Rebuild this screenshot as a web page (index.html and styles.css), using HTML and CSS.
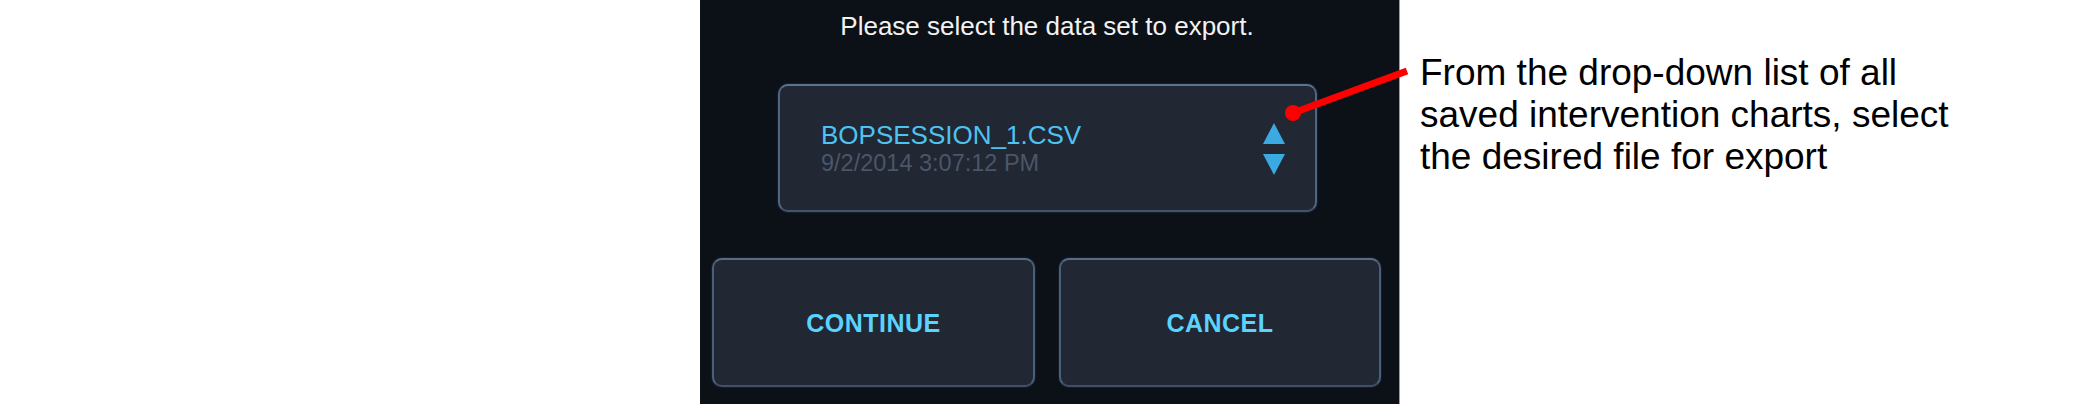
FILE: index.html
```html
<!DOCTYPE html>
<html lang="en">
<head>
<meta charset="utf-8">
<title>Export data set</title>
<link rel="stylesheet" href="styles.css">
</head>
<body>
<div class="page">
  <div class="spacer"></div>
  <div class="panel">
    <div class="title">Please select the data set to export.</div>
    <div class="dropdown">
      <div class="file">
        <div class="file-name">BOPSESSION_1.CSV</div>
        <div class="file-date">9/2/2014 3:07:12 PM</div>
      </div>
      <svg class="arrows" width="22" height="52" viewBox="0 0 22 52" aria-hidden="true">
        <polygon points="11,0 22,21 0,21" fill="#3ba9e2"/>
        <polygon points="0,31 22,31 11,52" fill="#3ba9e2"/>
      </svg>
    </div>
    <div class="buttons">
      <div class="btn">CONTINUE</div>
      <div class="btn">CANCEL</div>
    </div>
  </div>
  <div class="note">From the drop-down list of all<br>saved intervention charts, select<br>the desired file for export</div>
</div>
<svg class="callout" width="2100" height="404" viewBox="0 0 2100 404" aria-hidden="true">
  <line x1="1293" y1="113" x2="1407" y2="71" stroke="#ff0000" stroke-width="7"/>
  <circle cx="1293" cy="113" r="8" fill="#ff0000"/>
</svg>
</body>
</html>
```

FILE: styles.css
```css
html, body {
  margin: 0;
  padding: 0;
  background: #ffffff;
}

body {
  width: 2100px;
  height: 404px;
  overflow: hidden;
  position: relative;
  font-family: "Liberation Sans", Arial, sans-serif;
}

.page {
  display: flex;
  align-items: flex-start;
}

.spacer {
  width: 700px;
  flex: none;
}

.panel {
  width: 699px;
  height: 402px;
  flex: none;
  background: #0c1118;
  border-right: 1px solid #9c9c9c;
  border-bottom: 2px solid #9c9c9c;
  display: flex;
  flex-direction: column;
  padding-top: 11px;
  box-sizing: content-box;
}

.title {
  height: 30px;
  line-height: 30px;
  font-size: 26px;
  letter-spacing: 0;
  color: #f2f2f2;
  text-align: center;
  padding-right: 5px;
}

.dropdown {
  margin: 43px 0 0 78px;
  width: 539px;
  height: 128px;
  box-sizing: border-box;
  border: 2px solid #4f6580;
  border-top-color: #5b7290;
  border-bottom-color: #42546c;
  border-radius: 10px;
  background: #212733;
  box-shadow: 0 0 2px rgba(90, 120, 160, 0.45);
  display: flex;
  align-items: center;
  justify-content: space-between;
  padding: 1px 30px 0 41px;
}

.file-name {
  font-size: 26px;
  line-height: 28px;
  color: #4dc3f1;
}

.file-date {
  font-size: 23.5px;
  line-height: 28px;
  color: #4b5668;
}

.arrows {
  display: block;
}

.buttons {
  margin-top: 46px;
  padding-left: 12px;
  display: grid;
  grid-template-columns: 323px 322px;
  column-gap: 24px;
}

.btn {
  height: 129px;
  box-sizing: border-box;
  border: 2px solid #4a5f7a;
  border-top-color: #566d8a;
  border-bottom-color: #3f5068;
  border-radius: 10px;
  background: #212733;
  box-shadow: 0 0 2px rgba(90, 120, 160, 0.45);
  display: flex;
  align-items: center;
  justify-content: center;
  font-size: 25px;
  font-weight: bold;
  letter-spacing: 0.5px;
  color: #5ad3ff;
  padding-top: 1px;
}

.note {
  margin-left: 20px;
  padding-top: 52px;
  font-size: 37px;
  line-height: 42px;
  color: #000000;
  white-space: nowrap;
}

.callout {
  position: absolute;
  top: 0;
  left: 0;
  pointer-events: none;
}
```
